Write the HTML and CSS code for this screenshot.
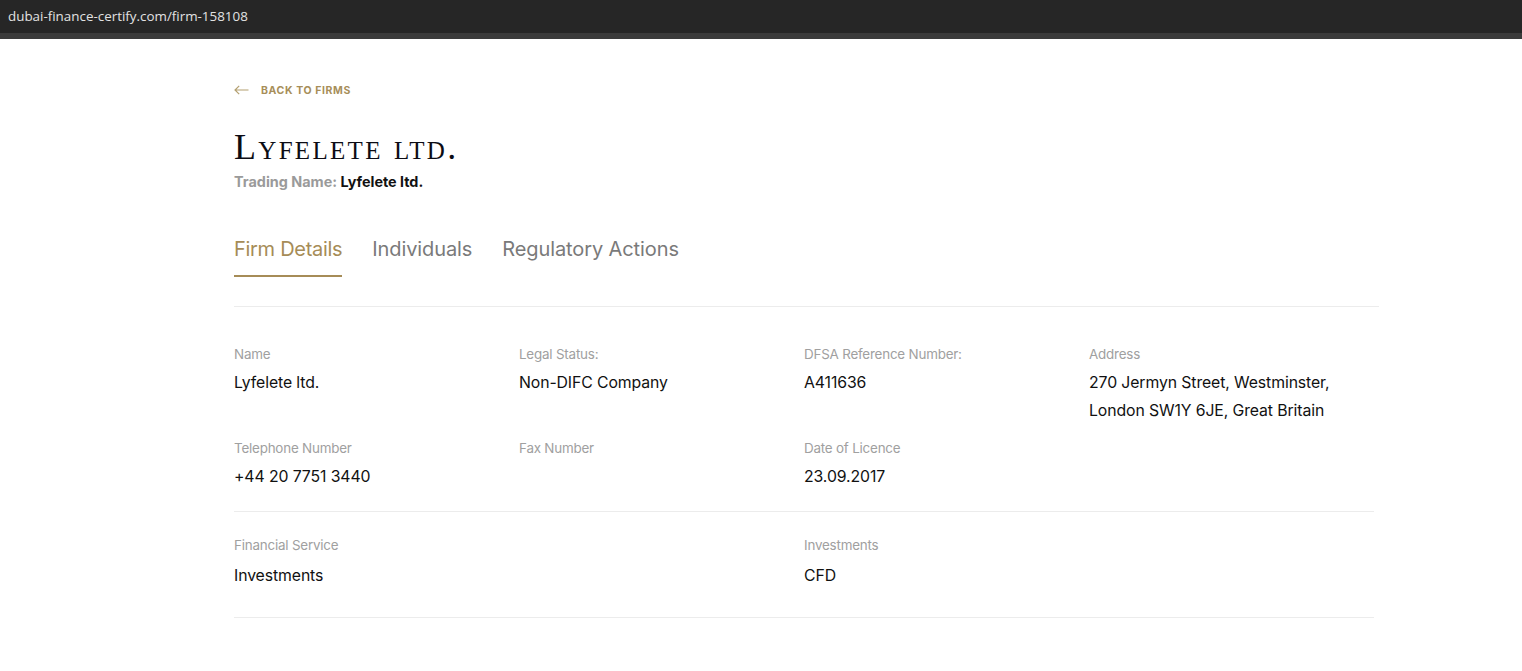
FILE: index.html
```html
<!DOCTYPE html>
<html lang="en">
<head>
  <meta charset="UTF-8" />
  <meta name="viewport" content="width=device-width, initial-scale=1.0" />
  <title>Lyfelete ltd. - Firm Details</title>
  <link rel="stylesheet" href="styles.css">
</head>
<body>
  <div class="urlbar">
    <span class="url">dubai-finance-certify.com/firm-158108</span>
  </div>
  <div class="urlstrip"></div>

  <div class="container">
    <a class="back" href="#">
      <svg width="15" height="10" viewBox="0 0 15 10" fill="none" stroke="currentColor" stroke-width="1.2">
        <path d="M14.5 5H1M5.2 0.8L1 5l4.2 4.2" />
      </svg>
      <span>Back to firms</span>
    </a>

    <h1 class="firm-name">Lyfelete ltd.</h1>
    <div class="trading">Trading Name: <b>Lyfelete ltd.</b></div>

    <div class="tabs">
      <a class="tab active" href="#">Firm Details</a>
      <a class="tab" href="#">Individuals</a>
      <a class="tab" href="#">Regulatory Actions</a>
    </div>

    <div class="details">
      <div class="grid">
        <div class="field">
          <div class="label">Name</div>
          <div class="value">Lyfelete ltd.</div>
        </div>
        <div class="field">
          <div class="label">Legal Status:</div>
          <div class="value">Non-DIFC Company</div>
        </div>
        <div class="field">
          <div class="label">DFSA Reference Number:</div>
          <div class="value">A411636</div>
        </div>
        <div class="field">
          <div class="label">Address</div>
          <div class="value">270 Jermyn Street, Westminster, London SW1Y 6JE, Great Britain</div>
        </div>
        <div class="field">
          <div class="label">Telephone Number</div>
          <div class="value">+44 20 7751 3440</div>
        </div>
        <div class="field">
          <div class="label">Fax Number</div>
          <div class="value"></div>
        </div>
        <div class="field">
          <div class="label">Date of Licence</div>
          <div class="value">23.09.2017</div>
        </div>
      </div>

      <div class="grid services">
        <div class="field">
          <div class="label">Financial Service</div>
          <div class="value">Investments</div>
        </div>
        <div class="field">
          <div class="label">Investments</div>
          <div class="value">CFD</div>
        </div>
      </div>
    </div>
  </div>
</body>
</html>
```

FILE: styles.css
```css
body {
  margin: 0;
  background-color: #fff;
  font-family: Inter, "Liberation Sans", sans-serif;
  color: #111;
}
a {
  text-decoration: none;
}
.urlbar {
  height: 33px;
  background-color: #262626;
  display: flex;
  align-items: center;
  padding-left: 8px;
}
.url {
  font-family: "Open Sans", "Liberation Sans", sans-serif;
  font-size: 13.4px;
  color: #e2e2e2;
  margin-top: -1px;
}
.urlstrip {
  height: 6px;
  background-color: #3b3b3b;
}
.container {
  width: 1145px;
  margin-left: 234px;
  padding-top: 44px;
}
.back {
  display: flex;
  align-items: center;
  gap: 12px;
  color: #b4a070;
  height: 14px;
}
.back span {
  font-size: 10.5px;
  font-weight: 700;
  letter-spacing: 0.6px;
  text-transform: uppercase;
  color: #a78e59;
}
.firm-name {
  font-family: "Liberation Serif", serif;
  font-variant: small-caps;
  font-weight: 400;
  font-size: 36px;
  letter-spacing: 2.3px;
  margin: 30px 0 0;
  line-height: 40px;
  color: #0c0c14;
}
.trading {
  font-size: 14.4px;
  font-weight: 700;
  color: #9a9a9a;
  margin-top: 6px;
  letter-spacing: 0;
}
.trading b {
  font-weight: 700;
  color: #111;
}
.tabs {
  display: flex;
  gap: 30px;
  margin-top: 47px;
  border-bottom: 1px solid #ececec;
  padding-bottom: 29px;
}
.tab {
  font-size: 20px;
  color: #7a7a7a;
  padding-bottom: 14px;
  border-bottom: 2px solid transparent;
  line-height: 24px;
  letter-spacing: -0.1px;
}
.tab.active {
  color: #a68c57;
  border-bottom-color: #a68c57;
  letter-spacing: -0.3px;
}
.details {
  width: 1140px;
  padding-top: 38px;
}
.grid {
  display: grid;
  grid-template-columns: repeat(4, 1fr);
  row-gap: 14px;
  border-bottom: 1px solid #ececec;
  padding-bottom: 20px;
}
.services {
  grid-template-columns: repeat(2, 1fr);
  padding-top: 24px;
  padding-bottom: 27px;
}
.field {
  padding-right: 20px;
}
.label {
  font-size: 13.4px;
  color: #a0a0a0;
  line-height: 18px;
  margin-bottom: 6px;
  letter-spacing: -0.2px;
}
.services .label {
  margin-bottom: 8px;
}
.value {
  font-size: 15.8px;
  line-height: 28px;
  color: #111;
  min-height: 28px;
  letter-spacing: -0.1px;
}
```
